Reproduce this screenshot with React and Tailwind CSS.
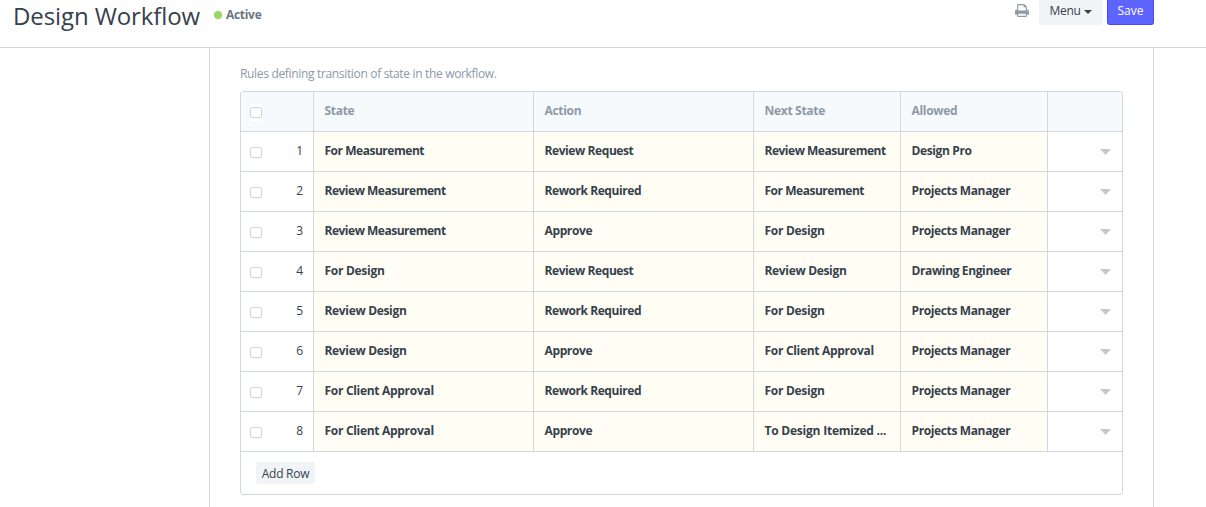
import React from "react";

const rows = [
  ["For Measurement", "Review Request", "Review Measurement", "Design Pro"],
  ["Review Measurement", "Rework Required", "For Measurement", "Projects Manager"],
  ["Review Measurement", "Approve", "For Design", "Projects Manager"],
  ["For Design", "Review Request", "Review Design", "Drawing Engineer"],
  ["Review Design", "Rework Required", "For Design", "Projects Manager"],
  ["Review Design", "Approve", "For Client Approval", "Projects Manager"],
  ["For Client Approval", "Rework Required", "For Design", "Projects Manager"],
  ["For Client Approval", "Approve", "To Design Itemized ...", "Projects Manager"],
];

const headings = ["State", "Action", "Next State", "Allowed"];

const tracking = {
  "Review Measurement": "tracking-[-0.49px]",
  "For Measurement": "tracking-[-0.47px]",
  "Review Request": "tracking-[-0.42px]",
  "Rework Required": "tracking-[-0.43px]",
  "For Client Approval": "tracking-[-0.3px]",
  "For Design": "tracking-[-0.28px]",
  "Review Design": "tracking-[-0.33px]",
  "To Design Itemized ...": "tracking-[-0.22px]",
};

const gridRow =
  "grid h-10 grid-cols-[72px_220px_220px_147px_147px_75px] border-b border-[#d1d8dd]";

function PrintIcon() {
  return (
    <svg viewBox="0 0 1664 1792" className="mt-[3px] h-[15px] w-[14px] fill-[#8d99a6]">
      <path d="M384 1536h896v-256h-896v256zM384 896h896v-384h-160q-40 0-68-28t-28-68v-160h-640v640zM1536 960q0-26-19-45t-45-19-45 19-19 45 19 45 45 19 45-19 19-45zM1664 960v416q0 13-9.5 22.5t-22.5 9.5h-224v160q0 40-28 68t-68 28h-960q-40 0-68-28t-28-68v-160h-224q-13 0-22.5-9.5t-9.5-22.5v-416q0-79 56.5-135.5t135.5-56.5h64v-544q0-40 28-68t68-28h672q40 0 88 20t76 48l152 152q28 28 48 76t20 88v256h64q79 0 135.5 56.5t56.5 135.5z" />
    </svg>
  );
}

function Checkbox() {
  return (
    <span className="mt-[12px] ml-[9px] flex h-[17px] w-[12px] items-center justify-center bg-white">
      <span className="h-[11px] w-[12px] rounded-[2px] border border-[#d1d3d8] bg-white" />
    </span>
  );
}

function HeaderCell({ children }) {
  return (
    <div className="border-l border-[#d1d8dd] pt-[10px] pl-[10.5px] font-bold tracking-[-0.3px] text-[#8d99a6]">
      {children}
    </div>
  );
}

function Cell({ children }) {
  return (
    <div
      className={
        "overflow-hidden border-l border-[#d1d8dd] bg-[#fffdf4] pt-[10px] pl-[10.5px] font-bold whitespace-nowrap text-[#36414c] " +
        (tracking[children] || "tracking-[-0.37px]")
      }
    >
      {children}
    </div>
  );
}

export default function App() {
  return (
    <div className="flex h-[507px] w-[1206px] flex-col overflow-hidden bg-white font-['Open_Sans',sans-serif] text-[12px] leading-[18px] text-[#36414c]">
      <header className="flex h-12 shrink-0 items-start border-b border-[#d1d8dd] pl-[13px]">
        <h1 className="w-[188px] text-[24px] leading-8 font-medium tracking-[-0.1px] whitespace-nowrap">
          Design Workflow
        </h1>
        <div className="mt-[6px] ml-[13px] flex items-center gap-[4px]">
          <span className="h-2 w-2 rounded-full bg-[#98d85b]" />
          <span className="font-bold tracking-[-0.3px] text-[#6c7680]">Active</span>
        </div>
        <div className="mr-[52px] ml-auto flex items-start">
          <PrintIcon />
          <button className="ml-[10px] flex h-[25px] w-[64px] items-start justify-center gap-[4px] rounded-b-[3px] bg-[#f0f4f7] pt-[2px] tracking-[-0.35px]">
            Menu
            <span className="mt-[8px] border-x-4 border-t-4 border-x-transparent border-t-[#36414c]" />
          </button>
          <button className="ml-[4px] flex h-[25px] w-[47px] items-start justify-center rounded-b-[3px] border border-t-0 border-[#444bff] bg-[#5e64ff] pt-[2px] text-white">
            Save
          </button>
        </div>
      </header>
      <main className="ml-[209px] w-[945px] grow border-x border-[#d1d8dd] px-[30px] pt-[17px]">
        <p className="tracking-[-0.33px] text-[#8d99a6]">
          Rules defining transition of state in the workflow.
        </p>
        <div className="mt-[8px] h-[404px] w-[883px] overflow-hidden rounded-[3px] border border-[#d1d8dd]">
          <div className={gridRow + " bg-[#f7fafc]"}>
            <div>
              <Checkbox />
            </div>
            {headings.map((h) => (
              <HeaderCell key={h}>{h}</HeaderCell>
            ))}
            <div className="border-l border-[#d1d8dd]" />
          </div>
          {rows.map((row, i) => (
            <div className={gridRow} key={i}>
              <div className="flex justify-between pr-[10px]">
                <Checkbox />
                <span className="pt-[10px]">{i + 1}</span>
              </div>
              {row.map((text, j) => (
                <Cell key={j}>{text}</Cell>
              ))}
              <div className="flex items-start justify-end border-l border-[#d1d8dd] pr-[11px]">
                <svg viewBox="0 0 11 6" className="mt-[17px] h-[6px] w-[11px] fill-[#c8c8c8]">
                  <path d="M0 0H11L5.5 6Z" />
                </svg>
              </div>
            </div>
          ))}
          <button className="mt-[10px] ml-[15px] h-[22px] w-[59px] rounded-[3px] bg-[#f0f4f7] pt-[2px] tracking-[-0.25px]">
            Add Row
          </button>
        </div>
      </main>
    </div>
  );
}
